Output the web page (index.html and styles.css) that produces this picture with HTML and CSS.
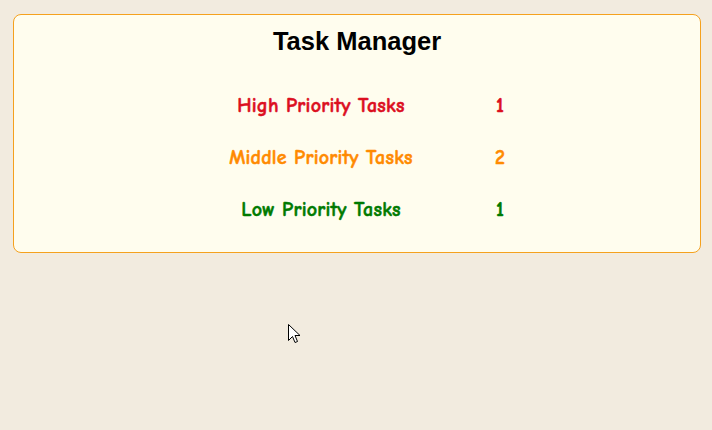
FILE: index.html
```html
<!DOCTYPE html>
<html>
<head>
<meta charset="utf-8">
<link rel="stylesheet" href="styles.css">
</head>
<body>
<div class="card">
  <h1 class="title">Task Manager</h1>
  <div class="rows">
    <div class="label high">High Priority Tasks</div><div class="count high">1</div>
    <div class="label mid">Middle Priority Tasks</div><div class="count mid">2</div>
    <div class="label low">Low Priority Tasks</div><div class="count low">1</div>
  </div>
</div>
<svg class="cursor" width="13" height="20" viewBox="0 0 13 20">
  <path d="M0.5 0.5 L0.5 16.5 L4.5 12.5 L7 18.5 L9.5 17.5 L7 11.5 L12 11.5 Z" fill="#fff" stroke="#000" stroke-width="1"/>
</svg>
</body>
</html>
```
FILE: styles.css
```css
html, body {
  margin: 0;
  padding: 0;
}
body {
  background: #f2ebdf;
  width: 712px;
  height: 430px;
  position: relative;
  overflow: hidden;
  padding: 14px 11px 0 13px;
  box-sizing: border-box;
}
.card {
  background: #fffdee;
  border: 1px solid #f5a11e;
  border-radius: 8px;
  padding: 12px 0 16px;
  height: 239px;
  box-sizing: border-box;
}
.title {
  margin: 0;
  text-align: center;
  font-family: "Liberation Sans", Arial, sans-serif;
  font-weight: bold;
  font-size: 25.5px;
  line-height: 28px;
  color: #000;
}
.rows {
  margin-top: 24px;
  display: grid;
  grid-template-columns: 286px 72px;
  grid-auto-rows: 52px;
  justify-content: center;
  align-items: center;
  font-family: "Comic Sans MS", "Comic Neue", "Open Sans", sans-serif;
  font-weight: bold;
  font-size: 20px;
  letter-spacing: 0.2px;
  -webkit-text-stroke: 0.5px currentColor;
}
.label, .count {
  text-align: center;
}
.high { color: #dc0f1f; }
.mid { color: #ff8a00; }
.low { color: #007a00; }
.cursor {
  position: absolute;
  left: 288px;
  top: 324px;
}
```
